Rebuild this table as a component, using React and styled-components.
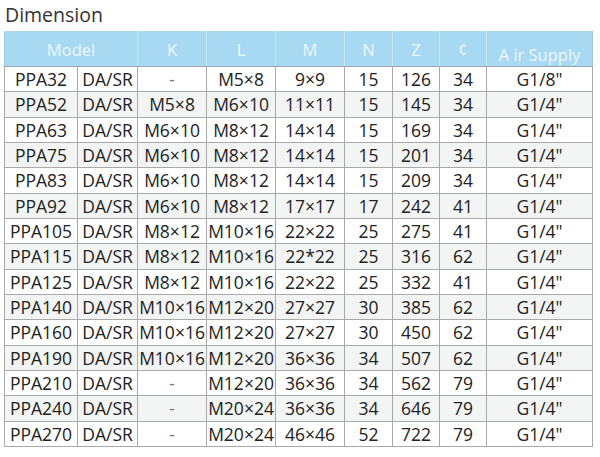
import React from "react";
import styled, { createGlobalStyle } from "styled-components";

const Global = createGlobalStyle`
  html, body { margin: 0; padding: 0; background: #ffffff; }
  body { font-family: "Open Sans", "Liberation Sans", sans-serif; color: #2a2a2a; }
`;

const Page = styled.div`
  width: 600px;
  height: 457px;
  padding: 2px 0 0 4px;
  box-sizing: border-box;
  overflow: hidden;
`;

const Title = styled.h1`
  margin: 0 0 4px 1px;
  font-size: 19.5px;
  font-weight: 400;
  line-height: 25px;
  color: #333;
`;

const Table = styled.table`
  border-collapse: collapse;
  table-layout: fixed;
  width: 588px;
`;

const HeadCell = styled.th`
  box-sizing: border-box;
  background: #a7d9f3;
  color: #eef8fd;
  font-weight: 400;
  font-size: 16.5px;
  height: 35px;
  padding: ${p => (p.$low ? "11px 0 0" : "0")};
  text-align: center;
  border-left: 1px solid #c9e8f7;
  border-right: 1px solid #c9e8f7;
  border-top: 1px solid #a7d9f3;
  border-bottom: 1px solid #9aa6ad;
  &:first-child { border-left-color: #a0c8dc; }
  &:last-child { border-right-color: #a0c8dc; }
`;

const Row = styled.tr`
  background: ${p => (p.$alt ? "#f3f5f5" : "#ffffff")};
`;

const Cell = styled.td`
  height: 24.33px;
  padding: 0;
  font-size: 17.5px;
  line-height: 20px;
  text-align: center;
  color: ${p => (p.$dim ? "#777" : "#222")};
  border: 1px solid #a9a9a9;
  white-space: nowrap;
  overflow: hidden;
`;

const widths = [73, 60, 69, 69, 69, 48, 47, 47, 106];

const data = [
  ["PPA32", "DA/SR", "-", "M5×8", "9×9", "15", "126", "34", "G1/8\""],
  ["PPA52", "DA/SR", "M5×8", "M6×10", "11×11", "15", "145", "34", "G1/4\""],
  ["PPA63", "DA/SR", "M6×10", "M8×12", "14×14", "15", "169", "34", "G1/4\""],
  ["PPA75", "DA/SR", "M6×10", "M8×12", "14×14", "15", "201", "34", "G1/4\""],
  ["PPA83", "DA/SR", "M6×10", "M8×12", "14×14", "15", "209", "34", "G1/4\""],
  ["PPA92", "DA/SR", "M6×10", "M8×12", "17×17", "17", "242", "41", "G1/4\""],
  ["PPA105", "DA/SR", "M8×12", "M10×16", "22×22", "25", "275", "41", "G1/4\""],
  ["PPA115", "DA/SR", "M8×12", "M10×16", "22*22", "25", "316", "62", "G1/4\""],
  ["PPA125", "DA/SR", "M8×12", "M10×16", "22×22", "25", "332", "41", "G1/4\""],
  ["PPA140", "DA/SR", "M10×16", "M12×20", "27×27", "30", "385", "62", "G1/4\""],
  ["PPA160", "DA/SR", "M10×16", "M12×20", "27×27", "30", "450", "62", "G1/4\""],
  ["PPA190", "DA/SR", "M10×16", "M12×20", "36×36", "34", "507", "62", "G1/4\""],
  ["PPA210", "DA/SR", "-", "M12×20", "36×36", "34", "562", "79", "G1/4\""],
  ["PPA240", "DA/SR", "-", "M20×24", "36×36", "34", "646", "79", "G1/4\""],
  ["PPA270", "DA/SR", "-", "M20×24", "46×46", "52", "722", "79", "G1/4\""],
];

export default function App() {
  return (
    <Page>
      <Global />
      <Title>Dimension</Title>
      <Table>
        <colgroup>
          {widths.map((w, i) => (
            <col key={i} style={{ width: w }} />
          ))}
        </colgroup>
        <thead>
          <tr>
            <HeadCell colSpan={2}>Model</HeadCell>
            <HeadCell>K</HeadCell>
            <HeadCell>L</HeadCell>
            <HeadCell>M</HeadCell>
            <HeadCell>N</HeadCell>
            <HeadCell>Z</HeadCell>
            <HeadCell>¢</HeadCell>
            <HeadCell $low>A ir Supply</HeadCell>
          </tr>
        </thead>
        <tbody>
          {data.map((r, i) => (
            <Row key={r[0]} $alt={i % 2 === 1}>
              {r.map((c, j) => (
                <Cell key={j} $dim={c === "-"}>
                  {c}
                </Cell>
              ))}
            </Row>
          ))}
        </tbody>
      </Table>
    </Page>
  );
}
